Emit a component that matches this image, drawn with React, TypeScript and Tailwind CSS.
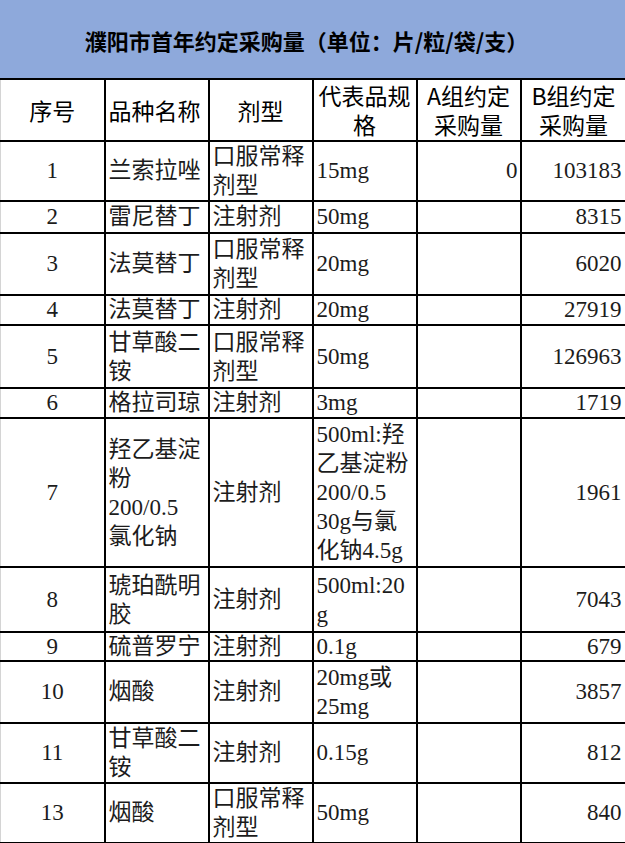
import React from "react";

type Row = {
  no: string;
  name: string[];
  form: string[];
  spec: string[];
  a: string;
  b: string;
  h: string;
};

const rows: Row[] = [
  { no: "1", name: ["兰索拉唑"], form: ["口服常释", "剂型"], spec: ["15mg"], a: "0", b: "103183", h: "h-[60px]" },
  { no: "2", name: ["雷尼替丁"], form: ["注射剂"], spec: ["50mg"], a: "", b: "8315", h: "h-[32px]" },
  { no: "3", name: ["法莫替丁"], form: ["口服常释", "剂型"], spec: ["20mg"], a: "", b: "6020", h: "h-[62px]" },
  { no: "4", name: ["法莫替丁"], form: ["注射剂"], spec: ["20mg"], a: "", b: "27919", h: "h-[30px]" },
  { no: "5", name: ["甘草酸二", "铵"], form: ["口服常释", "剂型"], spec: ["50mg"], a: "", b: "126963", h: "h-[63px]" },
  { no: "6", name: ["格拉司琼"], form: ["注射剂"], spec: ["3mg"], a: "", b: "1719", h: "h-[30px]" },
  {
    no: "7",
    name: ["羟乙基淀", "粉", "200/0.5", "氯化钠"],
    form: ["注射剂"],
    spec: ["500ml:羟", "乙基淀粉", "200/0.5", "30g与氯", "化钠4.5g"],
    a: "",
    b: "1961",
    h: "h-[149px]",
  },
  { no: "8", name: ["琥珀酰明", "胶"], form: ["注射剂"], spec: ["500ml:20", "g"], a: "", b: "7043", h: "h-[65px]" },
  { no: "9", name: ["硫普罗宁"], form: ["注射剂"], spec: ["0.1g"], a: "", b: "679", h: "h-[29px]" },
  { no: "10", name: ["烟酸"], form: ["注射剂"], spec: ["20mg或", "25mg"], a: "", b: "3857", h: "h-[62px]" },
  { no: "11", name: ["甘草酸二", "铵"], form: ["注射剂"], spec: ["0.15g"], a: "", b: "812", h: "h-[60px]" },
  { no: "13", name: ["烟酸"], form: ["口服常释", "剂型"], spec: ["50mg"], a: "", b: "840", h: "h-[59px]" },
];

const Lines = ({ lines }: { lines: string[] }) => (
  <div className={lines.length > 1 ? "leading-[29px]" : "leading-[26px]"}>
    {lines.map((l, i) => (
      <div key={i} className="whitespace-nowrap">
        {l}
      </div>
    ))}
  </div>
);

const bodyFont = { fontFamily: '"Liberation Serif", "Noto Sans CJK SC", serif' };
const headFont = { fontFamily: '"Noto Sans CJK SC", "Noto Sans", sans-serif' };

export default function App() {
  const cell = "border-2 border-black align-middle p-0";
  return (
    <div className="w-[625px] h-[843px] bg-white overflow-hidden">
      <div
        className="h-[78px] bg-[#8EA9DB] flex items-center justify-center pt-[2px] text-[22px] font-bold text-black"
        style={headFont}
      >
        <span className="-ml-[12px]">濮阳市首年约定采购量（单位：片/粒/袋/支）</span>
      </div>
      <table className="w-[625px] table-fixed border-collapse" style={bodyFont}>
        <colgroup>
          <col className="w-[104px]" />
          <col className="w-[104px]" />
          <col className="w-[104px]" />
          <col className="w-[104px]" />
          <col className="w-[104px]" />
          <col className="w-[105px]" />
        </colgroup>
        <thead>
          <tr className="h-[62px] text-[23px] leading-[29px] text-black" style={headFont}>
            <th className={`${cell} border-l border-l-[#d4d4d4] font-normal text-center`}>序号</th>
            <th className={`${cell} font-normal text-left pl-[3px]`}>品种名称</th>
            <th className={`${cell} font-normal text-center`}>剂型</th>
            <th className={`${cell} font-normal text-center`}>
              <div>代表品规</div>
              <div>格</div>
            </th>
            <th className={`${cell} font-normal text-center`}>
              <div>A组约定</div>
              <div>采购量</div>
            </th>
            <th className={`${cell} border-r-0 font-normal text-center`}>
              <div>B组约定</div>
              <div>采购量</div>
            </th>
          </tr>
        </thead>
        <tbody className="text-[23px] leading-[26px] text-[#1c1c1c]">
          {rows.map((r) => (
            <tr key={r.no} className={r.h}>
              <td className={`${cell} border-l border-l-[#d4d4d4] text-center`}>{r.no}</td>
              <td className={`${cell} pl-[3px] text-left`}>
                <Lines lines={r.name} />
              </td>
              <td className={`${cell} pl-[3px] text-left`}>
                <Lines lines={r.form} />
              </td>
              <td className={`${cell} pl-[3px] text-left`}>
                <Lines lines={r.spec} />
              </td>
              <td className={`${cell} pr-[2px] text-right`}>{r.a}</td>
              <td className={`${cell} border-r-0 pr-[4px] text-right`}>{r.b}</td>
            </tr>
          ))}
        </tbody>
      </table>
    </div>
  );
}
